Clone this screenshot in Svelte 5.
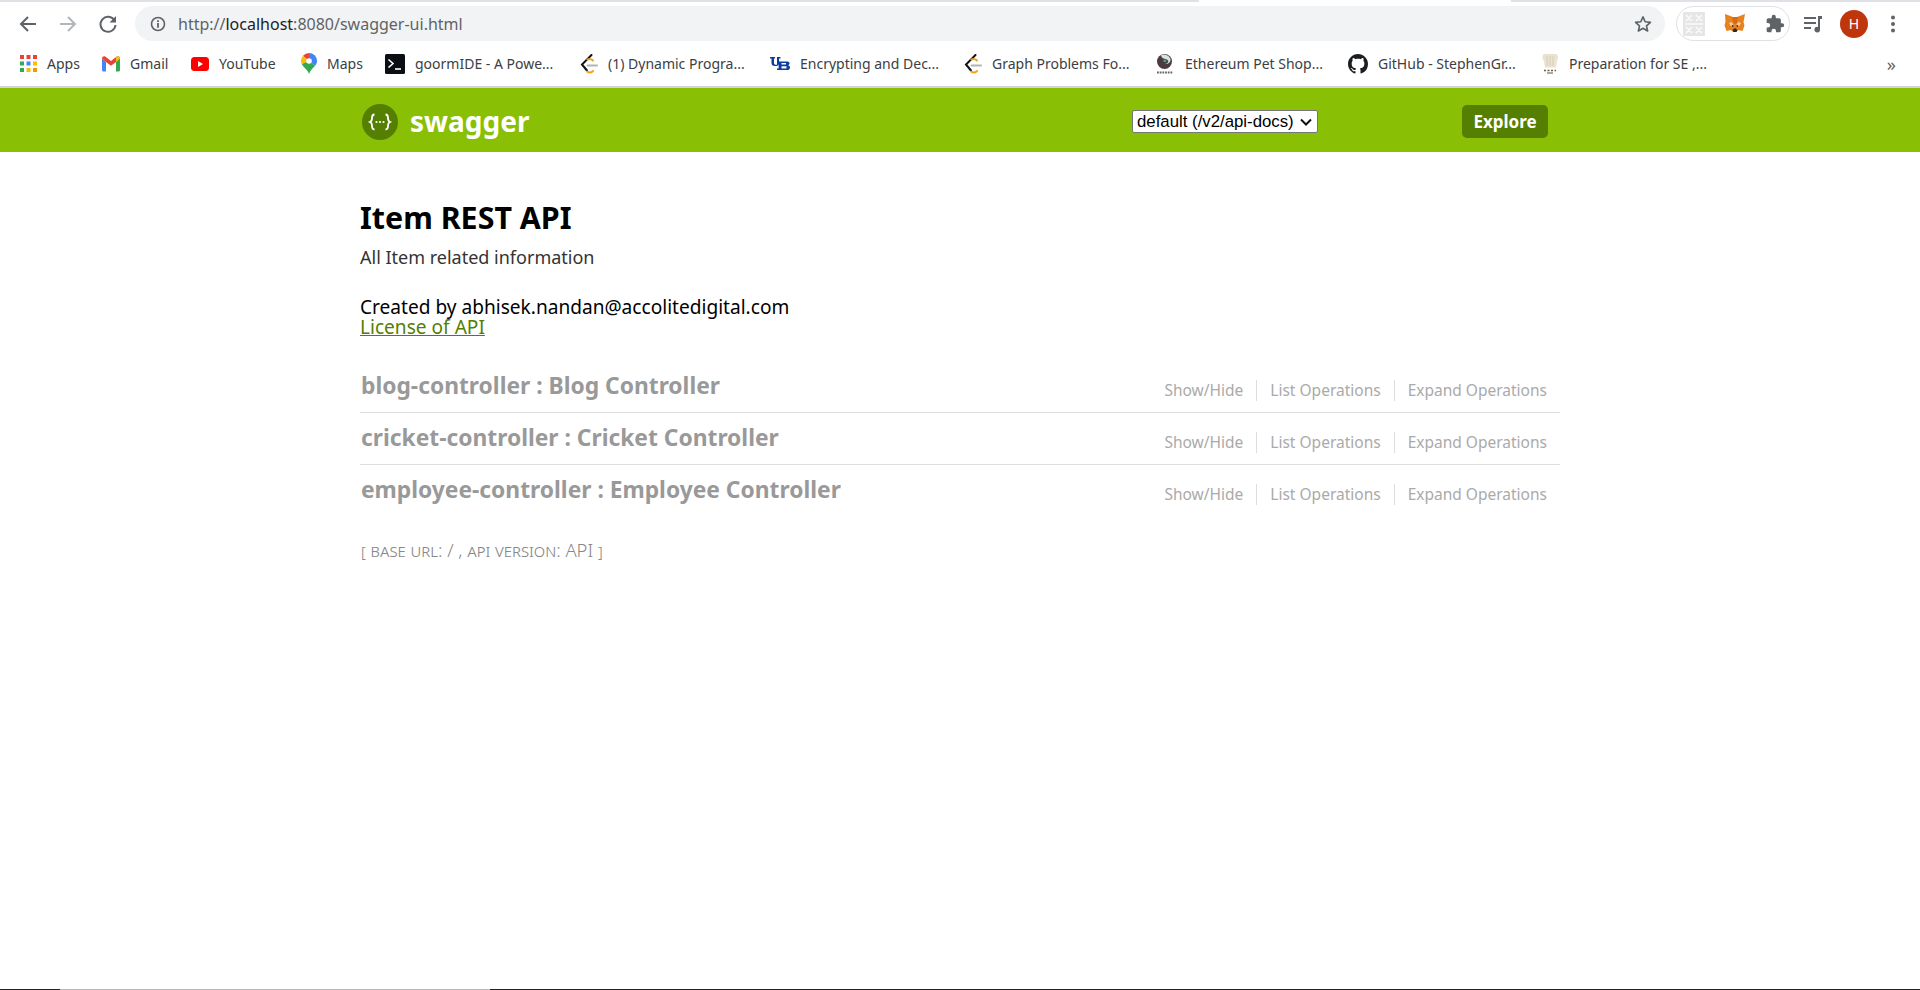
<script lang="ts">
    const bookmarks = [
        { name: "Apps", icon: "apps", width: 82 },
        { name: "Gmail", icon: "gmail", width: 89 },
        { name: "YouTube", icon: "youtube", width: 110 },
        { name: "Maps", icon: "maps", width: 84 },
        { name: "goormIDE - A Powe...", icon: "goorm", width: 195 },
        { name: "(1) Dynamic Progra...", icon: "leetcode", width: 190 },
        { name: "Encrypting and Dec...", icon: "ub", width: 194 },
        { name: "Graph Problems Fo...", icon: "leetcode", width: 191 },
        { name: "Ethereum Pet Shop...", icon: "truffle", width: 193 },
        { name: "GitHub - StephenGr...", icon: "github", width: 193 },
        { name: "Preparation for SE ,...", icon: "chef", width: 190 }
    ];

    const controllers: string[] = [
        "blog-controller : Blog Controller",
        "cricket-controller : Cricket Controller",
        "employee-controller : Employee Controller"
    ];

    const operations: string[] = ["Show/Hide", "List Operations", "Expand Operations"];
</script>

<div class="page">
    <div class="tabstrip">
        <div class="strip left"></div>
        <div class="strip right"></div>
    </div>

    <div class="toolbar">
        <div class="nav">
            <svg width="20" height="20" viewBox="0 0 20 20"><path d="M18 10H3.500M10 3l-7 7 7 7" fill="none" stroke="#5f6368" stroke-width="2"/></svg>
            <svg width="20" height="20" viewBox="0 0 20 20"><path d="M2 10h14.500M10 3l7 7-7 7" fill="none" stroke="#b3b6ba" stroke-width="2"/></svg>
            <svg width="20" height="20" viewBox="0 0 20 20"><path d="M16.500 6.500A7.500 7.500 0 1 0 17.500 11" fill="none" stroke="#5f6368" stroke-width="2"/><path d="M18 2v6.500h-6.500z" fill="#5f6368"/></svg>
        </div>
        <div class="omnibox">
            <svg class="info" width="16" height="16" viewBox="0 0 16 16"><circle cx="8" cy="8" r="6.500" fill="none" stroke="#5f6368" stroke-width="1.600"/><path d="M7.100 7h1.800v4.800H7.100zM7.100 4.200h1.800V6H7.100z" fill="#5f6368"/></svg>
            <span class="url"><span class="dim">http://</span>localhost<span class="dim">:8080/swagger-ui.html</span></span>
            <svg class="star" width="20" height="20" viewBox="0 0 24 24"><path d="M12 3.500l2.600 5.800 6.300.7-4.700 4.200 1.300 6.200L12 17.200l-5.500 3.200 1.300-6.200L3.100 10l6.300-.7z" fill="none" stroke="#5f6368" stroke-width="2" stroke-linejoin="round"/></svg>
        </div>
        <div class="extensions">
            <svg width="22" height="24" viewBox="0 0 22 24">
                <rect width="22" height="24" fill="#e6e6e6"/>
                <path d="M3 3l6 6m0-6L3 9m10-6l6 6m0-6l-6 6M3 15l6 6m0-6l-6 6m10-6l6 6m0-6l-6 6M2 12h18" stroke="#fafafa" stroke-width="1.500" fill="none"/>
            </svg>
            <svg width="22" height="22" viewBox="0 0 22 22">
                <path d="M1 1l8 3h4l8-3-1.500 8 1 3.500-2 5.500-4.500-1-2 2h-3l-2-2-4.500 1-2-5.500 1-3.500z" fill="#e8821e"/>
                <path d="M5 10l3-1 1.500 3-3 1zM17 10l-3-1-1.500 3 3 1z" fill="#f6c8a0"/>
                <path d="M8 4h6l-1 6-2 1-2-1z" fill="#d7691a"/>
                <path d="M8.500 17l2.500-2 2.500 2-1 2h-3z" fill="#33261c"/>
                <path d="M8 12l2 1-2 1zM14 12l-2 1 2 1z" fill="#33261c"/>
            </svg>
            <svg width="20" height="20" viewBox="0 0 24 24"><path d="M20.500 11H19V7a2 2 0 0 0-2-2h-4V3.500a2.500 2.500 0 0 0-5 0V5H4a2 2 0 0 0-2 2v3.800h1.500a2.700 2.700 0 0 1 0 5.400H2V20a2 2 0 0 0 2 2h3.800v-1.500a2.700 2.700 0 0 1 5.400 0V22H17a2 2 0 0 0 2-2v-4h1.500a2.500 2.500 0 0 0 0-5z" fill="#5f6368"/></svg>
        </div>
        <svg class="media" width="20" height="20" viewBox="0 0 20 20"><path d="M1 3h12v2H1zM1 8h12v2H1zM1 13h7v2H1z" fill="#5f6368"/><path d="M15 2h4v3h-2v10.500a2.800 2.800 0 1 1-2-2.600z" fill="#5f6368"/></svg>
        <div class="avatar">H</div>
        <svg class="menu" width="6" height="20" viewBox="0 0 6 20"><circle cx="3" cy="3.500" r="2" fill="#5f6368"/><circle cx="3" cy="10" r="2" fill="#5f6368"/><circle cx="3" cy="16.500" r="2" fill="#5f6368"/></svg>
    </div>

    <div class="bookmarks">
        {#each bookmarks as bookmark}
            <div class="bookmark" style:width="{bookmark.width}px">
                <span class="bm-icon">
                    {#if bookmark.icon == "apps"}
                        <svg width="17" height="17" viewBox="0 0 17 17">
                            <path d="M0 0h4v4H0zM6.500 0h4v4h-4zM13 0h4v4h-4z" fill="#ea4335"/>
                            <path d="M0 6.500h4v4H0z" fill="#34a853"/><path d="M6.500 6.500h4v4h-4z" fill="#4285f4"/><path d="M13 6.500h4v4h-4z" fill="#fbbc04"/>
                            <path d="M0 13h4v4H0z" fill="#34a853"/><path d="M6.500 13h4v4h-4z" fill="#fbbc04"/><path d="M13 13h4v4h-4z" fill="#f29900"/>
                        </svg>
                    {:else if bookmark.icon == "gmail"}
                        <svg width="18" height="16" viewBox="0 0 18 16">
                            <path d="M0 2.500V14a1.500 1.500 0 0 0 1.500 1.500H4V6z" fill="#4285f4"/>
                            <path d="M18 2.500V14a1.500 1.500 0 0 1-1.500 1.500H14V6z" fill="#34a853"/>
                            <path d="M0 2.500C0 .5 2.200-.3 3.500.7L9 5l5.500-4.300C15.800-.3 18 .5 18 2.500L14 6 9 9.800 4 6z" fill="#ea4335"/>
                            <path d="M14 .9l.5-.2C15.800-.3 18 .5 18 2.500L14 6z" fill="#fbbc04"/>
                        </svg>
                    {:else if bookmark.icon == "youtube"}
                        <svg width="18" height="14" viewBox="0 0 18 14"><rect width="18" height="14" rx="3.500" fill="#f00"/><path d="M7 4l5 3-5 3z" fill="#fff"/></svg>
                    {:else if bookmark.icon == "maps"}
                        <svg width="16" height="21" viewBox="0 0 16 21">
                            <path d="M8 0a8 8 0 0 1 8 8c0 2-1 3.500-2 5L8 8z" fill="#4285f4"/>
                            <path d="M8 0a8 8 0 0 0-6 2.700L8 8z" fill="#ea4335"/>
                            <path d="M2 2.700A8 8 0 0 0 0 8c0 1 .3 2 .8 3L8 8z" fill="#fbbc04"/>
                            <path d="M.8 11c1.500 3.500 6 5.500 7.200 10 1-3.500 3.500-5.500 6-8L8 8z" fill="#34a853"/>
                            <circle cx="8" cy="8" r="2.800" fill="#fff"/>
                        </svg>
                    {:else if bookmark.icon == "goorm"}
                        <svg width="20" height="20" viewBox="0 0 20 20"><rect width="20" height="20" rx="1.500" fill="#0b0f14"/><path d="M3.500 5.500L8 9.500l-4.500 4" fill="none" stroke="#fff" stroke-width="1.600"/><path d="M10 15h6" stroke="#fff" stroke-width="1.600"/></svg>
                    {:else if bookmark.icon == "leetcode"}
                        <svg width="18" height="20" viewBox="0 0 18 20">
                            <path d="M11.500 1L2 10.500l5 6" fill="none" stroke="#111" stroke-width="2" stroke-linecap="round"/>
                            <path d="M7 17.500c2 1.500 4 1.500 6-.5M7.500 5.500c2-1 4-.5 5.500 1" fill="none" stroke="#f4a11c" stroke-width="2" stroke-linecap="round"/>
                            <path d="M7.500 11.500H17" stroke="#b3b3b3" stroke-width="2" stroke-linecap="round"/>
                        </svg>
                    {:else if bookmark.icon == "ub"}
                        <svg width="20" height="13" viewBox="0 0 20 13">
                            <path d="M0 0h5v1.500H4V6c0 1.200.7 1.800 2 1.800h1V0h-.5 4V1.500h-1.500V6.500c0 1.500-1 2.500-3 2.500H5C2.700 9 1.500 7.800 1.500 6V1.500H0z" fill="#0d3b9e"/>
                            <path d="M7 4.500h9.500c2 0 3 .6 3 2 0 .9-.6 1.400-1.600 1.700 1.300.3 2.100 1 2.100 2.200 0 1.700-1.200 2.600-3.500 2.600H7v-1.600h1.600V6.100H7zM11.500 6.100v1.500h4.500V6.100zM11.500 9.200v2.200h5V9.200z" fill="#0d3b9e" fill-rule="evenodd"/>
                        </svg>
                    {:else if bookmark.icon == "truffle"}
                        <svg width="20" height="20" viewBox="0 0 20 20">
                            <circle cx="9.500" cy="7.500" r="7.500" fill="#4b3a3f"/>
                            <path d="M6 1a7.500 7.500 0 0 1 9.500 4c.5 3-2 5.500-6 5 3-.5 4.500-2 3.500-3.500S8.500 5 7.500 4C6.500 3 6 2 6 1z" fill="#d5e4e0"/>
                            <path d="M8.500 5.500c1.500 0 3 .5 3 1.500S9.500 8.500 8.500 7.500z" fill="#3aa9a0"/>
                            <path d="M2 18.500h16" stroke="#666" stroke-width="2" stroke-dasharray="1.800 .9"/>
                        </svg>
                    {:else if bookmark.icon == "github"}
                        <svg width="20" height="20" viewBox="0 0 16 16"><path d="M8 0C3.580 0 0 3.580 0 8c0 3.540 2.290 6.530 5.470 7.590.4.070.55-.17.55-.38 0-.19-.010-.82-.010-1.490-2.010.37-2.530-.49-2.690-.94-.090-.23-.48-.94-.82-1.130-.28-.15-.68-.52-.010-.53.630-.010 1.080.58 1.230.82.720 1.210 1.870.87 2.330.66.070-.52.280-.87.510-1.070-1.780-.2-3.640-.89-3.640-3.950 0-.87.310-1.590.82-2.150-.080-.2-.36-1.020.080-2.120 0 0 .67-.21 2.200.82.640-.18 1.320-.27 2-.27s1.360.090 2 .27c1.530-1.040 2.200-.82 2.200-.82.440 1.100.160 1.920.080 2.120.51.560.82 1.270.82 2.150 0 3.070-1.870 3.750-3.650 3.950.29.250.54.730.54 1.480 0 1.070-.010 1.930-.010 2.200 0 .21.150.46.550.38A8.010 8.010 0 0 0 16 8c0-4.420-3.580-8-8-8z" fill="#1b1f23"/></svg>
                    {:else}
                        <svg width="18" height="20" viewBox="0 0 18 20">
                            <path d="M3 0c2-.6 3.500.3 6 0s4-.6 6 0c2.500 1 2.500 5 1 7l-1 6.500H4L3 7C1.500 5 .5 1 3 0z" fill="#eae3d2"/>
                            <path d="M6 2v10M9 1.500V12M12 2v10" stroke="#d6cdb5" stroke-width="1"/>
                            <path d="M3 16.500h12" stroke="#6a5a4c" stroke-width="1.500" stroke-dasharray="2 1.500"/>
                            <path d="M6 19h6" stroke="#9a8a7c" stroke-width="1.500"/>
                        </svg>
                    {/if}
                </span>
                <span class="bm-name">{bookmark.name}</span>
            </div>
        {/each}
        <span class="more">»</span>
    </div>

    <header class="swagger-header">
        <div class="wrap header-row">
            <svg class="logo" width="36" height="36" viewBox="0 0 36 36">
                <circle cx="18" cy="18" r="18" fill="#547f00"/>
                <path d="M12.500 10.500c-2.500 0-2.500 1.500-2.500 3.500s-.3 3.300-2 4c1.700.7 2 2 2 4s0 3.500 2.500 3.500M23.500 10.500c2.500 0 2.500 1.500 2.500 3.500s.3 3.300 2 4c-1.700.7-2 2-2 4s0 3.500-2.500 3.500" fill="none" stroke="#fff" stroke-width="1.800"/>
                <circle cx="14.500" cy="18" r="1.100" fill="#fff"/><circle cx="18" cy="18" r="1.100" fill="#fff"/><circle cx="21.500" cy="18" r="1.100" fill="#fff"/>
            </svg>
            <span class="brand">swagger</span>
            <div class="select-wrap">
                <select class="spec-select">
                    <option>default (/v2/api-docs)</option>
                </select>
                <svg class="chevron" width="12" height="8" viewBox="0 0 12 8"><path d="M1 1.500l5 5 5-5" fill="none" stroke="#111" stroke-width="2"/></svg>
            </div>
            <span class="explore">Explore</span>
        </div>
    </header>

    <main class="wrap content">
        <h1>Item REST API</h1>
        <p class="description">All Item related information</p>
        <p class="contact">Created by abhisek.nandan@accolitedigital.com</p>
        <a class="license" href="#license">License of API</a>

        <div class="resources">
            {#each controllers as controller}
                <div class="resource">
                    <span class="resource-name">{controller}</span>
                    <div class="ops">
                        {#each operations as op}
                            <span class="op">{op}</span>
                        {/each}
                    </div>
                </div>
            {/each}
        </div>

        <p class="footer">[ <span class="small">base url</span>: / , <span class="small">api version</span>: API ]</p>
    </main>

    <div class="bottom-edge">
        <div class="edge-gray"></div>
    </div>
</div>

<style>
    :global(body) {
        margin: 0;
        background: #fff;
    }

    .page {
        display: flex;
        flex-direction: column;
        height: 990px;
        overflow: hidden;
        font-family: "Noto Sans", "Open Sans", sans-serif;
    }

    .tabstrip {
        display: flex;
        justify-content: space-between;
        height: 2px;
    }

    .strip {
        background: #dee1e6;
    }

    .strip.left {
        width: 1199px;
    }

    .strip.right {
        width: 409px;
    }

    .toolbar {
        display: flex;
        align-items: center;
        height: 35px;
        margin-top: 4px;
    }

    .nav {
        display: flex;
        align-items: center;
        gap: 20px;
        width: 135px;
        padding-left: 18px;
        box-sizing: border-box;
    }

    .omnibox {
        display: flex;
        align-items: center;
        width: 1530px;
        height: 35px;
        box-sizing: border-box;
        padding: 0 12px 0 15px;
        border-radius: 18px;
        background: #f1f3f4;
    }

    .url {
        flex: 1;
        margin-left: 12px;
        font-size: 16px;
        color: #202124;
    }

    .dim {
        color: #5f6368;
    }

    .extensions {
        display: flex;
        align-items: center;
        gap: 19px;
        width: 114px;
        height: 35px;
        margin-left: 11px;
        padding-left: 6px;
        box-sizing: border-box;
        border: 1px solid #dfe1e5;
        border-radius: 18px;
    }

    .media {
        margin-left: 13px;
    }

    .avatar {
        display: flex;
        align-items: center;
        justify-content: center;
        width: 28px;
        height: 28px;
        margin-left: 17px;
        border-radius: 50%;
        background: #bf360c;
        color: #fff;
        font-size: 14px;
    }

    .menu {
        margin-left: 22px;
    }

    .bookmarks {
        display: flex;
        align-items: center;
        height: 45px;
        padding-left: 20px;
        border-bottom: 2px solid #d5d5d5;
        color: #3c4043;
        font-size: 14px;
    }

    .bookmark {
        display: flex;
        align-items: center;
        flex: none;
    }

    .bm-icon {
        display: flex;
        align-items: center;
        margin-right: 10px;
    }

    .bm-name {
        white-space: nowrap;
    }

    .more {
        margin-left: auto;
        margin-right: 24px;
        font-size: 18px;
        color: #5f6368;
    }

    .wrap {
        width: 1200px;
        margin: 0 auto;
        box-sizing: border-box;
    }

    .swagger-header {
        height: 64px;
        background: #89bf04;
    }

    .header-row {
        display: flex;
        align-items: center;
        height: 100%;
        padding: 3px 12px 0 2px;
    }

    .brand {
        margin-left: 12px;
        margin-bottom: 2px;
        font-size: 28px;
        font-weight: 700;
        color: #fff;
    }

    .select-wrap {
        position: relative;
        display: flex;
        margin-left: auto;
        margin-right: 144px;
    }

    .spec-select {
        width: 186px;
        height: 23px;
        padding: 0 0 0 4px;
        appearance: none;
        font-family: "Liberation Sans", sans-serif;
        font-size: 16.800px;
        color: #000;
        background: #fff;
        border: 1px solid #767676;
        border-radius: 2px;
    }

    .chevron {
        position: absolute;
        right: 6px;
        top: 8px;
        pointer-events: none;
    }

    .explore {
        display: flex;
        align-items: center;
        justify-content: center;
        width: 86px;
        height: 33px;
        border-radius: 5px;
        background: #547f00;
        color: #fff;
        font-size: 17px;
        font-weight: 700;
    }

    .content {
        display: flex;
        flex-direction: column;
        align-items: stretch;
    }

    h1 {
        margin: 44px 0 0;
        font-size: 30.400px;
        line-height: 44px;
        font-weight: 700;
        color: #000;
    }

    .description {
        margin: 4px 0 0;
        font-size: 18px;
        line-height: 26px;
        color: #333;
    }

    .contact {
        margin: 27px 0 0;
        font-size: 19.100px;
        line-height: 20px;
        color: #000;
    }

    .license {
        font-size: 19.100px;
        line-height: 21px;
        color: #547f00;
    }

    .resources {
        margin-top: 23px;
    }

    .resource {
        display: flex;
        align-items: center;
        justify-content: space-between;
        height: 52px;
        box-sizing: border-box;
        border-bottom: 1px solid #ddd;
    }

    .resource:last-child {
        border-bottom-color: transparent;
    }

    .resource-name {
        padding-left: 1px;
        padding-bottom: 3px;
        font-size: 22.800px;
        font-weight: 700;
        color: #999;
    }

    .ops {
        display: flex;
        align-items: center;
        padding-top: 8px;
        padding-right: 13px;
    }

    .op {
        padding: 0 13px;
        font-size: 15.500px;
        line-height: 21px;
        color: #aaa;
        border-right: 1px solid #ddd;
    }

    .op:last-child {
        padding-right: 0;
        border-right: none;
    }

    .footer {
        margin: 20px 0 0;
        padding-left: 1px;
        font-size: 18.400px;
        font-weight: 300;
        font-variant: small-caps;
        color: #888;
    }

    .bottom-edge {
        display: flex;
        height: 1px;
        margin-top: auto;
        padding-left: 60px;
        background: #222;
    }

    .edge-gray {
        width: 430px;
        background: #bbb;
    }
</style>
